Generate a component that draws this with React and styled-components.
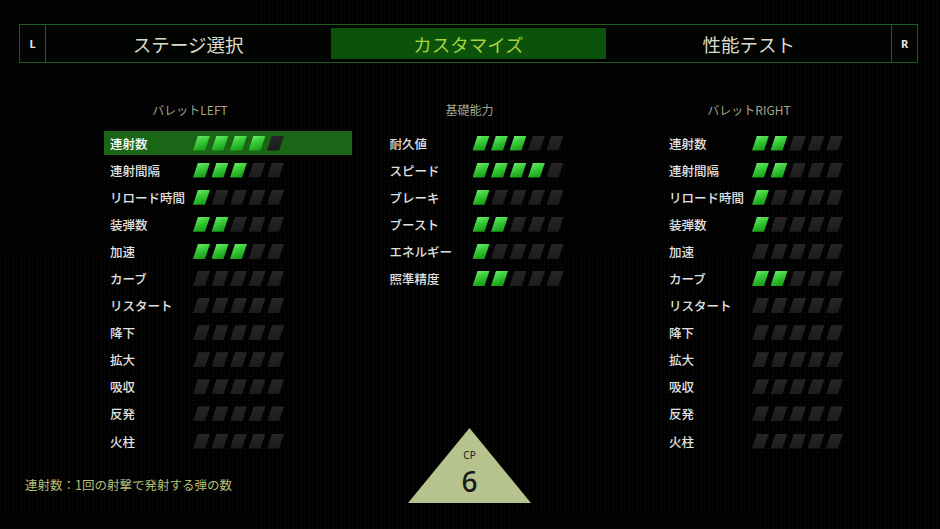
import React from "react";
import styled, { createGlobalStyle } from "styled-components";

const GlobalStyle = createGlobalStyle`
  html, body {
    margin: 0;
    padding: 0;
    background: #000;
  }
  body {
    font-family: "Noto Sans CJK JP", "Noto Sans", sans-serif;
  }
`;

const tabs = ["ステージ選択", "カスタマイズ", "性能テスト"];

const columns = [
  {
    title: "バレットLEFT",
    rows: [
      ["連射数", 4],
      ["連射間隔", 3],
      ["リロード時間", 1],
      ["装弾数", 2],
      ["加速", 3],
      ["カーブ", 0],
      ["リスタート", 0],
      ["降下", 0],
      ["拡大", 0],
      ["吸収", 0],
      ["反発", 0],
      ["火柱", 0],
    ],
    selected: 0,
  },
  {
    title: "基礎能力",
    rows: [
      ["耐久値", 3],
      ["スピード", 4],
      ["ブレーキ", 1],
      ["ブースト", 2],
      ["エネルギー", 1],
      ["照準精度", 2],
    ],
  },
  {
    title: "バレットRIGHT",
    rows: [
      ["連射数", 2],
      ["連射間隔", 2],
      ["リロード時間", 1],
      ["装弾数", 1],
      ["加速", 0],
      ["カーブ", 2],
      ["リスタート", 0],
      ["降下", 0],
      ["拡大", 0],
      ["吸収", 0],
      ["反発", 0],
      ["火柱", 0],
    ],
  },
];

export default function App() {
  return (
    <>
      <GlobalStyle />
      <Page>
        <TabBar>
          <Shoulder>L</Shoulder>
          <Tabs>
            {tabs.map((t, i) => (
              <Tab key={t} $active={i === 1}>
                {t}
              </Tab>
            ))}
          </Tabs>
          <Shoulder $right>R</Shoulder>
        </TabBar>

        <Columns>
          {columns.map((col) => (
            <Column key={col.title}>
              <ColumnTitle>{col.title}</ColumnTitle>
              <Rows>
                {col.rows.map(([label, value], i) => (
                  <Row key={label} $selected={col.selected === i}>
                    <Label $selected={col.selected === i}>{label}</Label>
                    <Gauge>
                      {[0, 1, 2, 3, 4].map((n) => (
                        <Segment key={n} $on={n < value} />
                      ))}
                    </Gauge>
                  </Row>
                ))}
              </Rows>
            </Column>
          ))}
        </Columns>

        <Hint>連射数：1回の射撃で発射する弾の数</Hint>

        <CostBadge>
          <CostLabel>CP</CostLabel>
          <CostValue>6</CostValue>
        </CostBadge>
      </Page>
    </>
  );
}

const Page = styled.div`
  position: relative;
  width: 940px;
  height: 529px;
  overflow: hidden;
  background-color: #000;
  background-image: repeating-linear-gradient(
      90deg,
      rgba(255, 255, 255, 0.018) 0 1px,
      transparent 1px 4px
    ),
    repeating-linear-gradient(
      0deg,
      rgba(255, 255, 255, 0.012) 0 1px,
      transparent 1px 4px
    );
  padding-top: 24px;
  box-sizing: border-box;
`;

const TabBar = styled.div`
  display: flex;
  margin: 0 22px 0 19px;
  height: 39px;
  box-sizing: border-box;
  border: 1px solid #1d5e1d;
  background: #020402;
`;

const Shoulder = styled.div`
  width: 25px;
  display: flex;
  align-items: center;
  justify-content: center;
  font-family: "Noto Sans", sans-serif;
  font-weight: 700;
  font-size: 11px;
  color: #e6e6e6;
  border-right: ${(p) => (p.$right ? "none" : "1px solid #1d5e1d")};
  border-left: ${(p) => (p.$right ? "1px solid #1d5e1d" : "none")};
`;

const Tabs = styled.div`
  flex: 1;
  display: grid;
  grid-template-columns: repeat(3, 1fr);
  gap: 6px;
  padding: 3px 5px;
`;

const Tab = styled.div`
  display: flex;
  align-items: center;
  justify-content: center;
  font-size: 18.5px;
  color: ${(p) => (p.$active ? "#a9d23c" : "#dcdccc")};
  background: ${(p) => (p.$active ? "#0b530b" : "transparent")};
`;

const Columns = styled.div`
  display: grid;
  grid-template-columns: repeat(3, 248px);
  column-gap: 31.5px;
  padding-left: 104px;
  margin-top: 37px;
`;

const Column = styled.div`
  display: flex;
  flex-direction: column;
`;

const ColumnTitle = styled.div`
  width: 172px;
  height: 20px;
  line-height: 20px;
  text-align: center;
  font-size: 12px;
  color: #a4a48a;
  margin-bottom: 11px;
`;

const Rows = styled.div`
  display: flex;
  flex-direction: column;
  gap: 3.1px;
`;

const Row = styled.div`
  display: flex;
  align-items: center;
  height: 24px;
  padding-left: 6px;
  background: ${(p) => (p.$selected ? "#1b6616" : "transparent")};
`;

const Label = styled.div`
  width: 83px;
  font-size: 12.5px;
  font-weight: 500;
  color: ${(p) => (p.$selected ? "#ffffff" : "#e2e2e2")};
`;

const Gauge = styled.div`
  display: flex;
  gap: 1.5px;
`;

const Segment = styled.div`
  width: 17px;
  height: 15px;
  clip-path: polygon(5px 0, 100% 0, calc(100% - 5px) 100%, 0 100%);
  background: ${(p) =>
    p.$on
      ? "linear-gradient(160deg, #7cf07c 0%, #3fd23f 35%, #22ad22 70%, #158a15 100%)"
      : "linear-gradient(180deg, #262626 0%, #1c1c1c 100%)"};
`;

const Hint = styled.div`
  margin: 23px 0 0 25px;
  font-size: 12.5px;
  line-height: 18px;
  color: #b5bf74;
`;

const CostBadge = styled.div`
  position: absolute;
  left: 408px;
  top: 428px;
  width: 123px;
  height: 75px;
  clip-path: polygon(50% 0, 100% 100%, 0 100%);
  background: #b7c38e;
  display: flex;
  flex-direction: column;
  align-items: center;
  padding-top: 22px;
  box-sizing: border-box;
  font-family: "Noto Sans", sans-serif;
  color: #1a1a1a;
`;

const CostLabel = styled.div`
  font-size: 10px;
  line-height: 10px;
`;

const CostValue = styled.div`
  font-size: 28px;
  font-weight: 500;
  line-height: 24px;
  margin-top: 9px;
`;
